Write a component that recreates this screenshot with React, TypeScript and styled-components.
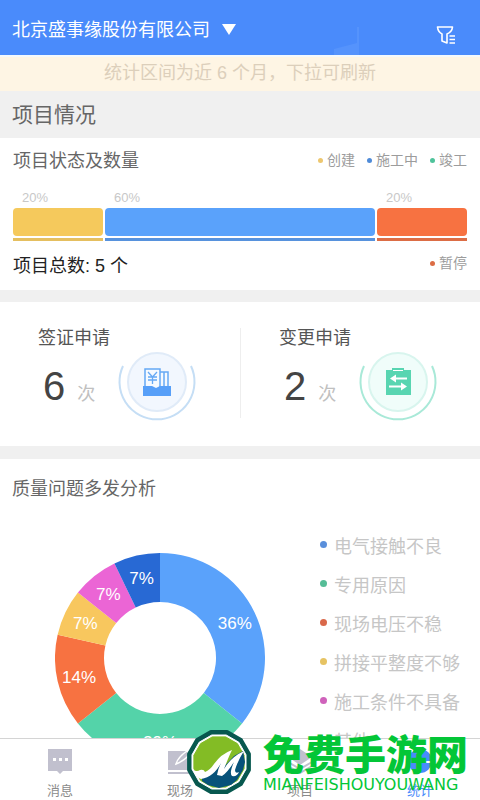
import React from "react";
import styled, { createGlobalStyle } from "styled-components";

const GlobalStyle = createGlobalStyle`
  *, *::before, *::after { box-sizing: border-box; }
  body { margin: 0; background: #fff; }
  body, button { font-family: "Liberation Sans", "Noto Sans CJK SC", sans-serif; }
  button { margin: 0; padding: 0; border: 0; background: none; color: inherit; cursor: pointer; }
  h1, h2, h3, p, ul { margin: 0; padding: 0; font-weight: 400; }
  ul { list-style: none; }
  svg { display: block; }
`;

const Screen = styled.div`
  position: relative;
  display: flex;
  flex-direction: column;
  height: 100vh;
  overflow: hidden;
`;

const Header = styled.header`
  flex: none;
  display: flex;
  align-items: center;
  justify-content: space-between;
  height: 57px;
  padding: 0 24px 0 12px;
  background: #4a8bfb;
  border-bottom: 2px solid #f4f9fc;
  color: #fff;
`;

const CompanyButton = styled.button`
  display: flex;
  align-items: center;
  gap: 12px;
  padding-top: 4px;
  font-size: 18px;
  line-height: 28px;
`;

const Skyline = styled.svg`
  align-self: flex-end;
  margin-left: auto;
  margin-right: 72px;
`;

const FilterButton = styled.button`
  padding-top: 14px;
`;

const Content = styled.main`
  flex: 1;
  min-height: 0;
  overflow-y: auto;
  scrollbar-width: none;
`;

const Notice = styled.p`
  height: 34px;
  background: #fef5e4;
  color: #dccfbb;
  font-size: 18px;
  line-height: 33px;
  text-align: center;
`;

const SectionTitle = styled.h1`
  height: 47px;
  padding-left: 12px;
  background: #f0f0f0;
  color: #666;
  font-size: 21px;
  line-height: 47px;
`;

const StatusPanel = styled.section`
  height: 152px;
  padding: 9px 13px 0;
`;

const Row = styled.div`
  display: flex;
  align-items: flex-start;
  justify-content: space-between;
`;

const PanelTitle = styled.h2`
  color: #666;
  font-size: 18px;
  line-height: 28px;
`;

const StatusLegend = styled.ul`
  display: flex;
  gap: 12px;
  padding-top: 3px;
`;

const StatusKey = styled.li<{ $color: string }>`
  display: flex;
  align-items: center;
  gap: 4px;
  color: #9c9c9c;
  font-size: 14px;
  line-height: 20px;
  &::before {
    content: "";
    width: 5px;
    height: 5px;
    border-radius: 50%;
    background: ${(p) => p.$color};
  }
`;

const StatusBars = styled.div`
  display: flex;
  gap: 2px;
  margin: 13px 0 9px;
`;

const StatusPart = styled.div<{ $share: number }>`
  flex: ${(p) => p.$share} 1 0;
  color: #c8c8c8;
  font-size: 13px;
  line-height: 20px;
`;

const Share = styled.p`
  padding-left: 9px;
`;

const Bar = styled.div<{ $color: string }>`
  height: 28px;
  border-radius: 4px;
  background: ${(p) => p.$color};
`;

const Underline = styled.div<{ $color: string }>`
  height: 3px;
  margin-top: 2px;
  background: ${(p) => p.$color};
`;

const Total = styled.p`
  color: #222;
  font-size: 18px;
  line-height: 32px;
`;

const StatsPanel = styled.section`
  display: grid;
  grid-template-columns: 1fr 1fr;
  padding: 26px 0 28px;
  height: 169px;
  border-top: 12px solid #f0f0f0;
  border-bottom: 13px solid #f0f0f0;
`;

const Stat = styled.article`
  display: grid;
  grid-template-columns: 80px 78px;
  grid-template-rows: 20px 70px;
  padding-left: 38px;
  & + & {
    border-left: 1px solid #eee;
  }
`;

const StatTitle = styled.h2`
  grid-column: 1 / 3;
  color: #555;
  font-size: 18px;
  line-height: 20px;
`;

const Count = styled.p`
  display: flex;
  align-items: baseline;
  gap: 12px;
  padding: 14px 0 0 5px;
  color: #444;
  font-size: 40px;
  line-height: 48px;
`;

const Unit = styled.span`
  color: #c0c0c0;
  font-size: 18px;
`;

const QualityPanel = styled.section`
  padding: 16px 0 24px;
`;

const QualityTitle = styled(PanelTitle)`
  padding-left: 12px;
`;

const ChartRow = styled.div`
  display: flex;
  align-items: flex-start;
  gap: 55px;
  padding: 50px 0 0 55px;
`;

const Donut = styled.svg`
  flex: none;
  font-size: 17px;
`;

const CauseList = styled.ul`
  margin-top: -28px;
  flex: 1;
`;

const Cause = styled.li<{ $color: string }>`
  display: flex;
  align-items: center;
  gap: 7px;
  height: 39px;
  color: #c6c6c6;
  font-size: 18px;
  white-space: nowrap;
  &::before {
    content: "";
    width: 7px;
    height: 7px;
    border-radius: 50%;
    background: ${(p) => p.$color};
  }
`;

const TabBar = styled.nav`
  flex: none;
  display: grid;
  grid-template-columns: repeat(4, 1fr);
  height: 62px;
  border-top: 1px solid #d4d4d4;
  background: #fff;
`;

const Tab = styled.button<{ $active?: boolean }>`
  display: flex;
  flex-direction: column;
  align-items: center;
  gap: 8px;
  padding-top: 9px;
  color: ${(p) => (p.$active ? "#4a8bfb" : "#8b8b8b")};
  font-size: 13px;
  line-height: 18px;
`;

const Brand = styled.aside`
  position: absolute;
  right: 12px;
  bottom: 5px;
  display: flex;
  align-items: center;
  gap: 11px;
  color: #03c637;
  pointer-events: none;
`;

const BrandName = styled.p`
  font-family: "Noto Sans CJK SC", sans-serif;
  font-size: 41px;
  font-weight: 900;
  line-height: 46px;
  white-space: nowrap;
`;

const BrandLatin = styled.p`
  font-family: "DejaVu Sans", sans-serif;
  font-size: 16px;
  line-height: 20px;
  white-space: nowrap;
`;

const statuses = [
  { share: 20, color: "#f5c95c", line: "#e5bf60" },
  { share: 60, color: "#5aa2fb", line: "#5792dd" },
  { share: 20, color: "#f77241", line: "#dc6d45" },
];

const slices = [
  { parts: 5, label: "36%", color: "#5aa2fb" },
  { parts: 4, label: "29%", color: "#54d3a9" },
  { parts: 2, label: "14%", color: "#f77241" },
  { parts: 1, label: "7%", color: "#f8c75e" },
  { parts: 1, label: "7%", color: "#eb65d5" },
  { parts: 1, label: "7%", color: "#2869d4" },
];

const causes = [
  { name: "电气接触不良", color: "#5a8fdb" },
  { name: "专用原因", color: "#55bd97" },
  { name: "现场电压不稳", color: "#d9684a" },
  { name: "拼接平整度不够", color: "#e6c363" },
  { name: "施工条件不具备", color: "#cf62bb" },
  { name: "其他", color: "#3b6fc4" },
];

const point = (turn: number, radius: number) => {
  const a = turn * Math.PI * 2;
  return { x: 105 + radius * Math.sin(a), y: 105 - radius * Math.cos(a) };
};

function DonutChart() {
  let done = 0;
  return (
    <Donut width="210" height="210" viewBox="0 0 210 210" role="img" aria-label="质量问题多发分析">
      {slices.map((s, i) => {
        const from = done / 14;
        done += s.parts;
        const to = done / 14;
        const [a, b, c, d] = [point(from, 105), point(to, 105), point(to, 56), point(from, 56)];
        const mid = point((from + to) / 2, 83);
        return (
          <g key={i}>
            <path
              d={`M${a.x} ${a.y}A105 105 0 0 1 ${b.x} ${b.y}L${c.x} ${c.y}A56 56 0 0 0 ${d.x} ${d.y}Z`}
              fill={s.color}
            />
            <text x={mid.x} y={mid.y + 7} textAnchor="middle" fill="#fff">
              {s.label}
            </text>
          </g>
        );
      })}
    </Donut>
  );
}

function Dial({ arc, ring, fill, children }: { arc: string; ring: string; fill: string; children: React.ReactNode }) {
  return (
    <svg width="78" height="78" viewBox="0 0 78 78" aria-hidden="true">
      <circle cx="39" cy="34" r="29" fill={fill} stroke={ring} strokeWidth="2" />
      <path d="M5 18A37.500 37.500 0 1 0 73 18" fill="none" stroke={arc} strokeWidth="2" />
      {children}
    </svg>
  );
}

const ringPoints = (radius: number) =>
  Array.from({ length: 12 }, (_, i) => {
    const a = ((i * 30 + 15) * Math.PI) / 180;
    return `${(33 + radius * Math.sin(a)).toFixed(1)},${(33 - radius * Math.cos(a)).toFixed(1)}`;
  }).join(" ");

function BrandLogo() {
  return (
    <svg width="66" height="66" viewBox="0 0 66 66" aria-hidden="true">
      <polygon points={ringPoints(31)} fill="#07584f" stroke="#07584f" strokeWidth="4" strokeLinejoin="round" />
      <polygon points={ringPoints(28)} fill="#fff" stroke="#fff" strokeWidth="1" strokeLinejoin="round" />
      <polygon points={ringPoints(26)} fill="#83bc25" stroke="#83bc25" strokeWidth="1" strokeLinejoin="round" />
      <path d="M16 47Q27 45 36 32L33 43L48 27L57 22L59 33L57 41L51 51L45 56L33 59L22 56L16 52Z" fill="#07527a" />
      <path
        d="M7 41Q11 43 14 41Q18 40 19 43Q24 41 28 35Q35 25 46 21Q43 27 38 40Q45 28 58 22Q52 31 49 41Q49 45 53 43Q51 48 46 47Q43 44 48 33Q41 44 36 47L31 46Q32 39 37 30Q29 48 15 50Q10 49 7 41Z"
        fill="#fff"
      />
    </svg>
  );
}

export default function App() {
  return (
    <Screen>
      <GlobalStyle />
      <Header>
        <CompanyButton type="button">
          北京盛事缘股份有限公司
          <svg width="14" height="11" viewBox="0 0 14 11" aria-hidden="true">
            <path d="M0 0H14L7 11Z" fill="#fff" />
          </svg>
        </CompanyButton>
        <Skyline width="30" height="30" viewBox="0 0 30 30" aria-hidden="true">
          <path d="M0 24L23 18V2H25V30H0Z" fill="#5593fc" />
        </Skyline>
        <FilterButton type="button" aria-label="筛选">
          <svg width="20" height="20" viewBox="0 0 20 20" fill="none" stroke="#fff" aria-hidden="true">
            <path d="M1.500 2H16.500Q16 7 11 9V18L6 16V9Q2 7 1.500 2Z" strokeWidth="1.600" strokeLinejoin="round" />
            <path d="M13.500 11H19M13.500 14.500H19M13.500 18H19" strokeWidth="1.500" />
          </svg>
        </FilterButton>
      </Header>

      <Content>
        <Notice>统计区间为近 6 个月，下拉可刷新</Notice>
        <SectionTitle>项目情况</SectionTitle>

        <StatusPanel>
          <Row>
            <PanelTitle>项目状态及数量</PanelTitle>
            <StatusLegend>
              <StatusKey $color="#edc76f">创建</StatusKey>
              <StatusKey $color="#4f8bd8">施工中</StatusKey>
              <StatusKey $color="#4fc39b">竣工</StatusKey>
            </StatusLegend>
          </Row>
          <StatusBars>
            {statuses.map((s, i) => (
              <StatusPart key={i} $share={s.share}>
                <Share>{s.share}%</Share>
                <Bar $color={s.color} />
                <Underline $color={s.line} />
              </StatusPart>
            ))}
          </StatusBars>
          <Row>
            <Total>项目总数: 5 个</Total>
            <StatusLegend>
              <StatusKey $color="#dc6d45">暂停</StatusKey>
            </StatusLegend>
          </Row>
        </StatusPanel>

        <StatsPanel>
          <Stat>
            <StatTitle>签证申请</StatTitle>
            <Count>
              6<Unit>次</Unit>
            </Count>
            <Dial arc="#c5def5" ring="#e0ebf8" fill="#f2f7fe">
              <path d="M27 42V21H42V42M42 24H46V40M46 24H50V40" fill="#f6faff" stroke="#66a9f5" strokeWidth="1.500" />
              <path d="M30 24L34.500 29L39 24M30 29H39M30 32H39M34.500 29V36" fill="none" stroke="#66a9f5" strokeWidth="1.300" />
              <path d="M25 38H34L38 40L42 38H53V48H25Z" fill="#579ff8" />
            </Dial>
          </Stat>
          <Stat>
            <StatTitle>变更申请</StatTitle>
            <Count>
              2<Unit>次</Unit>
            </Count>
            <Dial arc="#a9e9d8" ring="#d8f5ee" fill="#f0fdfa">
              <path d="M27 22H33V20H45V22H52V47H27Z" fill="#58d5b1" />
              <path d="M34 22.500H44" stroke="#fff" strokeWidth="1" />
              <path d="M48 30.500H35M30 38.500H43" stroke="#fff" strokeWidth="2" />
              <path d="M31 30.500L37 26.500V34.500ZM48 38.500L42 34.500V42.500Z" fill="#fff" />
            </Dial>
          </Stat>
        </StatsPanel>

        <QualityPanel>
          <QualityTitle>质量问题多发分析</QualityTitle>
          <ChartRow>
            <DonutChart />
            <CauseList>
              {causes.map((c) => (
                <Cause key={c.name} $color={c.color}>
                  {c.name}
                </Cause>
              ))}
            </CauseList>
          </ChartRow>
        </QualityPanel>
      </Content>

      <TabBar>
        <Tab type="button">
          <svg width="26" height="26" viewBox="0 0 26 26" aria-hidden="true">
            <path d="M1 1H25V23H16L13 26L10 23H1Z" fill="#c1c0ce" />
            <path d="M6 10H9V13H6ZM12 10H15V13H12ZM18 10H21V13H18Z" fill="#fff" />
          </svg>
          消息
        </Tab>
        <Tab type="button">
          <svg width="26" height="26" viewBox="0 0 26 26" aria-hidden="true">
            <path d="M1 3H25V22H1ZM1 24H25V26H1Z" fill="#c1c0ce" />
            <path d="M9 16Q11 9 20 3L23 6Q17 13 9 16Z" fill="#c1c0ce" stroke="#fff" strokeWidth="1.500" />
          </svg>
          现场
        </Tab>
        <Tab type="button">
          <svg width="26" height="26" viewBox="0 0 26 26" aria-hidden="true">
            <path d="M13 1L25 9L13 17L1 9Z" fill="#c1c0ce" />
            <path d="M1 14L13 21L25 14M1 18L13 25L25 18" fill="none" stroke="#c1c0ce" strokeWidth="2" />
          </svg>
          项目
        </Tab>
        <Tab type="button" $active aria-current="page">
          <svg width="26" height="26" viewBox="0 0 26 26" aria-hidden="true">
            <circle cx="13" cy="13" r="12" fill="#4a8bfb" />
            <path d="M13 1V14H26" fill="none" stroke="#fff" strokeWidth="2" />
          </svg>
          统计
        </Tab>
      </TabBar>

      <Brand>
        <BrandLogo />
        <div>
          <BrandName>免费手游网</BrandName>
          <BrandLatin>MIANFEISHOUYOUWANG</BrandLatin>
        </div>
      </Brand>
    </Screen>
  );
}
